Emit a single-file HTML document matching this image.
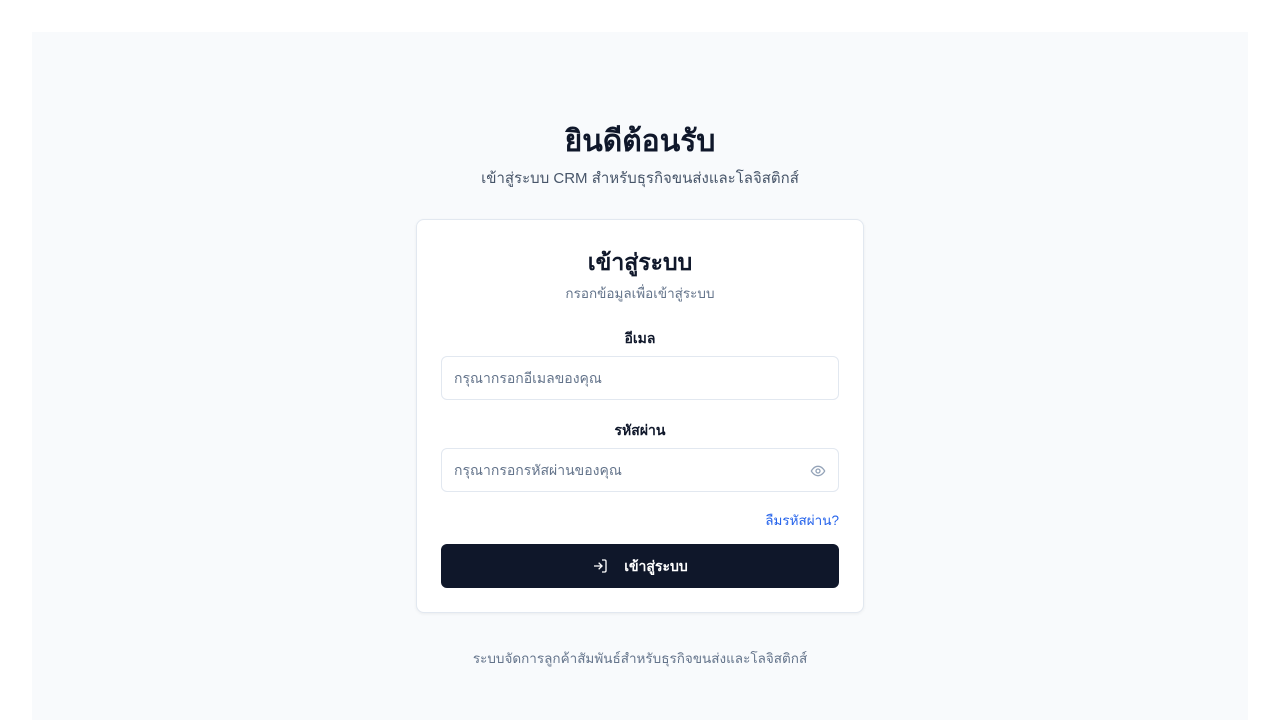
<!DOCTYPE html>
<html><head><meta charset="utf-8"><style>
*{box-sizing:border-box;margin:0;padding:0}
body{width:1280px;height:720px;background:#fff;font-family:"Liberation Sans","DejaVu Sans",sans-serif;overflow:hidden;position:relative}
.bg{position:absolute;left:32px;top:32px;width:1216px;height:688px;background:#f8fafc}
.c{position:absolute;left:0;width:1280px;text-align:center}
.card{position:absolute;left:416px;top:219px;width:448px;height:394px;background:#fff;border:1px solid #e2e8f0;border-radius:8px;box-shadow:0 1px 3px rgba(0,0,0,.06)}
.in{position:absolute;left:24px;width:398px;height:44px;border:1px solid #e2e8f0;border-radius:6px;font-size:14px;color:#64748b;padding:13px 12px;line-height:16px}
.lbl{position:absolute;left:0;width:446px;text-align:center;font-size:14px;font-weight:bold;color:#0f172a}
</style></head><body>
<div class="bg"></div>
<div class="c" style="top:118px;font-size:30px;font-weight:bold;color:#0f172a">ยินดีต้อนรับ</div>
<div class="c" style="top:166px;font-size:15px;color:#475569">เข้าสู่ระบบ CRM สำหรับธุรกิจขนส่งและโลจิสติกส์</div>
<div class="card">
<div class="lbl" style="top:25px;font-size:23px">เข้าสู่ระบบ</div>
<div class="lbl" style="top:62px;font-weight:normal;color:#64748b;font-size:13.5px">กรอกข้อมูลเพื่อเข้าสู่ระบบ</div>
<div class="lbl" style="top:108px">อีเมล</div>
<div class="in" style="top:136px">กรุณากรอกอีเมลของคุณ</div>
<div class="lbl" style="top:200px">รหัสผ่าน</div>
<div class="in" style="top:228px">กรุณากรอกรหัสผ่านของคุณ
<svg style="position:absolute;right:12px;top:14px" width="16" height="16" viewBox="0 0 24 24" fill="none" stroke="#94a3b8" stroke-width="2"><path d="M2 12s3.5-7 10-7 10 7 10 7-3.5 7-10 7S2 12 2 12z"/><circle cx="12" cy="12" r="3"/></svg></div>
<div style="position:absolute;right:24px;top:289px;font-size:13.5px;color:#2563eb">ลืมรหัสผ่าน?</div>
<div style="position:absolute;left:24px;top:324px;width:398px;height:44px;background:#0f172a;border-radius:6px;color:#fff;font-size:14px;font-weight:bold;text-align:center;line-height:44px">
<svg style="vertical-align:-3px;margin-right:16px" width="16" height="16" viewBox="0 0 24 24" fill="none" stroke="#fff" stroke-width="2"><path d="M15 3h4a2 2 0 0 1 2 2v14a2 2 0 0 1-2 2h-4M10 17l5-5-5-5M15 12H3"/></svg>เข้าสู่ระบบ</div>
</div>
<div class="c" style="top:647px;font-size:13.5px;color:#64748b">ระบบจัดการลูกค้าสัมพันธ์สำหรับธุรกิจขนส่งและโลจิสติกส์</div>
</body></html>
